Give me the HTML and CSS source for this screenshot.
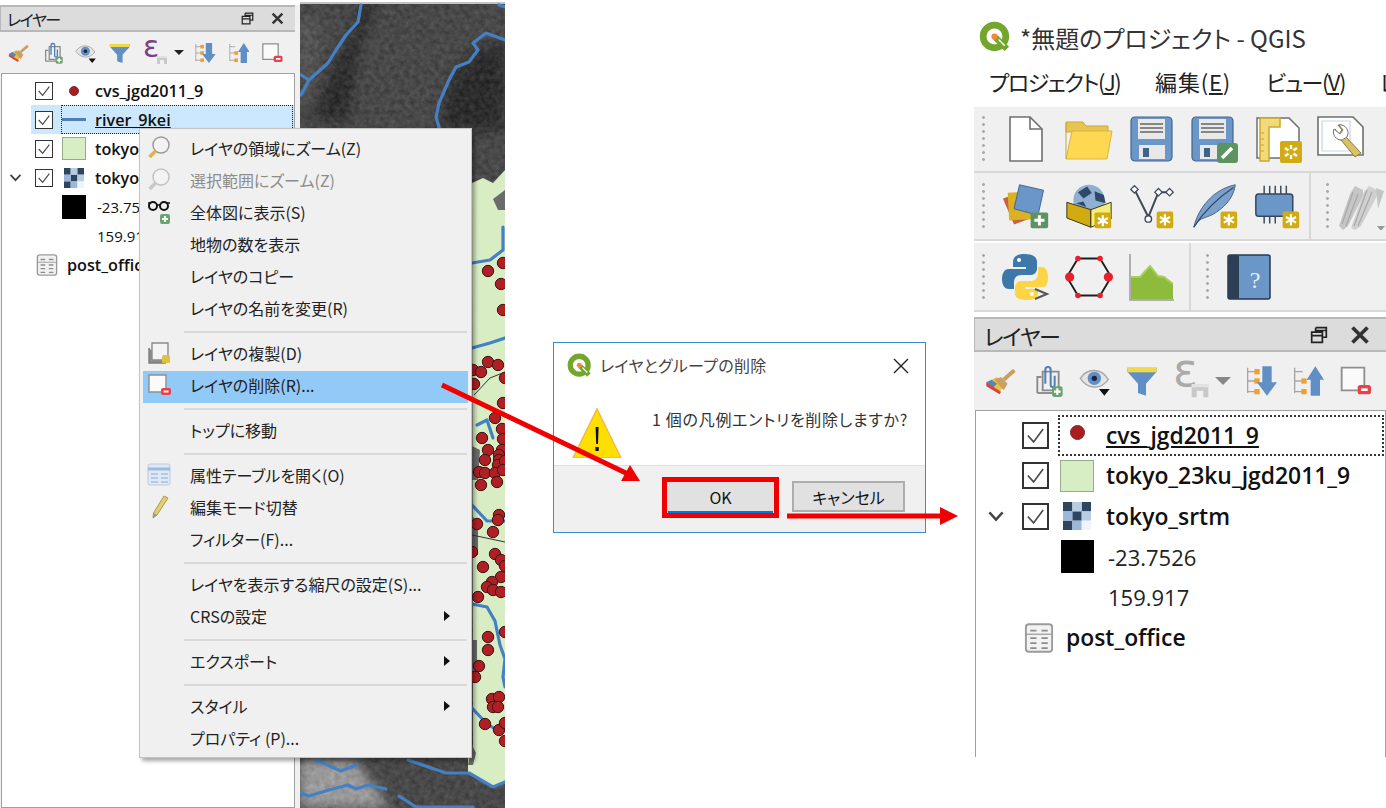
FILE: index.html
```html
<!DOCTYPE html>
<html lang="ja">
<head>
<meta charset="utf-8">
<title>QGIS レイヤの削除</title>
<link rel="stylesheet" href="styles.css">
</head>
<body>
<svg class="defs" aria-hidden="true">
  <defs>
    <symbol id="i-check" viewBox="0 0 18 18">
      <path d="M3 9l4.500 5L15 4" fill="none" stroke="#4a4a4a" stroke-width="1.300"/>
    </symbol>
    <symbol id="i-style" viewBox="0 0 24 24">
      <path d="M1 13l8-4 6 6-4 5z" fill="#e9c53d"/>
      <path d="M1 13l4-2 4 3-3 3z" fill="#4f86c6"/>
      <path d="M1 13l11 7-1 2L1 16z" fill="#d8433b"/>
      <path d="M7 11l5-2 5 5-3 5z" fill="#c9a063"/>
      <path d="M14 11l8-7" stroke="#c9a063" stroke-width="3" fill="none"/>
    </symbol>
    <symbol id="i-clip" viewBox="0 0 24 24">
      <path d="M4 21V9h3M8 5h12v14H8z" fill="none" stroke="#8a8a8a" stroke-width="1.4"/>
      <path d="M4 21h14" stroke="#8a8a8a" stroke-width="1.4"/>
      <path d="M10 14V3.500a2 2 0 0 1 4 0V15a1.500 1.500 0 0 0 3 0V8" fill="none" stroke="#4f7fb5" stroke-width="1.5"/>
      <rect x="15" y="16" width="8" height="8" rx="2" fill="#6aa56e"/>
      <path d="M19 17.500v5M16.500 20h5" stroke="#fff" stroke-width="1.6"/>
    </symbol>
    <symbol id="i-eye" viewBox="0 0 24 24">
      <path d="M1 10C6 2 17 2 22 11 16 19 6 18 1 10z" fill="#e4e4e4" stroke="#a8a8a8"/>
      <circle cx="11.500" cy="10" r="5" fill="#5f8fc4"/>
      <circle cx="11.500" cy="10" r="2" fill="#223"/>
      <path d="M15 18h8l-4 5z" fill="#111"/>
    </symbol>
    <symbol id="i-filter" viewBox="0 0 24 24">
      <path d="M1 2h22v3l-8 9v9l-6-2v-7L1 5z" fill="#5f8fc4"/>
      <path d="M1 2h22v3.500H1z" fill="#eed94e"/>
    </symbol>
    <symbol id="i-gem" viewBox="0 0 24 24">
      <path d="M13 15h10v8h-3v-4h-4v4h-3z" fill="#c9c9c9"/>
      <path d="M13 15h10v2H13z" fill="#e2e2e2"/>
    </symbol>
    <symbol id="i-expand" viewBox="0 0 24 24">
      <path d="M2 2v19M2 5h6M2 12h6M2 20h6" stroke="#a5a5a5" stroke-width="1" fill="none"/>
      <rect x="7" y="3" width="4" height="4" fill="#f0a030"/>
      <rect x="7" y="10" width="4" height="4" fill="#f0a030"/>
      <rect x="7" y="18" width="4" height="4" fill="#f0a030"/>
      <path d="M13 1h7v12h4l-7.500 10L9 13h4z" fill="#5f8fc4"/>
    </symbol>
    <symbol id="i-collapse" viewBox="0 0 24 24">
      <path d="M2 2v19M2 5h6M2 12h6M2 20h6" stroke="#a5a5a5" stroke-width="1" fill="none"/>
      <rect x="7" y="10" width="4" height="4" fill="#f0a030"/>
      <rect x="7" y="18" width="4" height="4" fill="#f0a030"/>
      <path d="M14 23h7V11h3L17.500 1 11 11h3z" fill="#5f8fc4"/>
    </symbol>
    <symbol id="i-remove" viewBox="0 0 24 24">
      <path d="M2 2h17v17H2z" fill="#fafafa" stroke="#8f8f8f" stroke-width="1.400"/>
      <rect x="14" y="15" width="10" height="7" rx="2" fill="#e8414a"/>
      <path d="M16.500 18.500h5" stroke="#fff" stroke-width="2"/>
    </symbol>
    <symbol id="i-zoom" viewBox="0 0 24 24">
      <circle cx="14" cy="9" r="8" fill="#f3f3f3" stroke="#9b9b9b" stroke-width="1.500"/>
      <path d="M8.500 15l-6 6" stroke="#e0b440" stroke-width="3.500"/>
    </symbol>
    <symbol id="i-zoomoff" viewBox="0 0 24 24">
      <circle cx="14" cy="9" r="8" fill="#f3f3f3" stroke="#c2c2c2" stroke-width="1.500"/>
      <path d="M8.500 15l-6 6" stroke="#c8c8c8" stroke-width="3.500"/>
    </symbol>
    <symbol id="i-glasses" viewBox="0 0 24 24">
      <circle cx="6" cy="6" r="4" fill="none" stroke="#111" stroke-width="2"/>
      <circle cx="17" cy="6" r="4" fill="none" stroke="#111" stroke-width="2"/>
      <path d="M10 5h3M1 3h3M19 3h4" stroke="#111" stroke-width="1.600"/>
      <rect x="13" y="14" width="10" height="10" rx="2" fill="#6aa56e"/>
      <path d="M18 16v6M15 19h6" stroke="#fff" stroke-width="2"/>
    </symbol>
    <symbol id="i-dup" viewBox="0 0 24 24">
      <path d="M2 7v15h17" fill="#8c8c8c" stroke="#7d7d7d" stroke-width="1.400"/>
      <path d="M5 2h16v17H5z" fill="#f4f4f4" stroke="#8a8a8a" stroke-width="1.400"/>
      <rect x="15" y="14" width="8" height="8" rx="1.500" fill="#dcc23f"/>
    </symbol>
    <symbol id="i-table" viewBox="0 0 24 24">
      <rect x="1" y="1" width="22" height="21" rx="2" fill="#dfe9f5" stroke="#bccbdf"/>
      <path d="M1 6h22" stroke="#9dbbe0" stroke-width="3"/>
      <path d="M4 11h7M14 11h7M4 15h7M14 15h7M4 19h7M14 19h7" stroke="#a9bfdc" stroke-width="1.500"/>
    </symbol>
    <symbol id="i-pencil" viewBox="0 0 24 24">
      <path d="M17 1l4 2-11 17-4 3 .5-5z" fill="#e4cf6a" stroke="#a89a50"/>
      <path d="M6.500 18l3.500 2-4 3z" fill="#999"/>
    </symbol>
    <symbol id="i-list" viewBox="0 0 24 24">
      <rect x="1.500" y="1" width="21" height="22" rx="2.500" fill="#f2f2f2" stroke="#9a9a9a" stroke-width="1.500"/>
      <path d="M5 6h5M14 6h5" stroke="#8c8c8c" stroke-width="1.400"/>
      <path d="M1.500 9h21" stroke="#9a9a9a"/>
      <path d="M5 12h5M14 12h5M5 16h5M14 16h5M5 20h5M14 20h5" stroke="#8c8c8c" stroke-width="1.400"/>
    </symbol>
    <symbol id="i-raster" viewBox="0 0 24 24">
      <rect width="24" height="24" fill="#dbe6f2"/>
      <rect width="8" height="8" fill="#2e4560"/>
      <rect x="16" width="8" height="8" fill="#2e4560"/>
      <rect x="8" y="8" width="8" height="8" fill="#2e4560"/>
      <rect y="16" width="8" height="8" fill="#2e4560"/>
      <rect y="8" width="8" height="8" fill="#9bb8d8"/>
      <rect x="8" width="8" height="8" fill="#b9cde2"/>
      <rect x="16" y="8" width="8" height="8" fill="#b9cde2"/>
      <rect x="8" y="16" width="8" height="8" fill="#9bb8d8"/>
      <rect x="16" y="16" width="8" height="8" fill="#f0f4f9"/>
    </symbol>
    <symbol id="i-qgis" viewBox="0 0 32 32">
      <circle cx="15" cy="15" r="11" fill="none" stroke="#73a62c" stroke-width="6.500"/>
      <path d="M16 16l11 11" stroke="#73a62c" stroke-width="6"/>
      <path d="M19 18l6 6" stroke="#fff" stroke-width="1.500"/>
      <circle cx="15" cy="15" r="3" fill="#ee8a3a"/>
    </symbol>
    <symbol id="i-warn" viewBox="0 0 50 50">
      <path d="M25 1l24 49H1z" fill="#ffdf00" stroke="#f2b94a" stroke-width="1.500"/>
      <path d="M23.600 19h3l-.6 17h-1.800zM23.400 39h3.400v4h-3.400z" fill="#111"/>
    </symbol>
    <symbol id="b-new" viewBox="0 0 48 48">
      <path d="M8 2h20l12 12v32H8z" fill="#fff" stroke="#6f6f6f" stroke-width="1.600"/>
      <path d="M28 2v12h12" fill="none" stroke="#6f6f6f" stroke-width="1.600"/>
    </symbol>
    <symbol id="b-open" viewBox="0 0 48 48">
      <path d="M1 7h17l3 4h22v6H1z" fill="#e8c451" stroke="#caa73a"/>
      <path d="M7 16h40l-5 28H1z" fill="#fdd850" stroke="#d9b541"/>
      <path d="M1 8v36" stroke="#caa73a"/>
    </symbol>
    <symbol id="b-save" viewBox="0 0 48 48">
      <rect x="3" y="2" width="41" height="44" rx="4" fill="#6a97c7" stroke="#44658f" stroke-width="1.200"/>
      <rect x="10" y="4" width="27" height="20" fill="#e8e8e8"/>
      <path d="M12 9h23M12 13h23M12 17h23" stroke="#666" stroke-width="1.400"/>
      <rect x="11" y="30" width="26" height="14" fill="#e8e8e8"/>
      <rect x="15" y="33" width="6" height="9" fill="#3e628c"/>
    </symbol>
    <symbol id="b-saveas" viewBox="0 0 48 48">
      <rect x="1" y="2" width="41" height="44" rx="4" fill="#6a97c7" stroke="#44658f" stroke-width="1.200"/>
      <rect x="8" y="4" width="27" height="20" fill="#e8e8e8"/>
      <path d="M10 9h23M10 13h23M10 17h23" stroke="#666" stroke-width="1.400"/>
      <rect x="9" y="30" width="26" height="14" fill="#e8e8e8"/>
      <rect x="13" y="33" width="6" height="9" fill="#3e628c"/>
      <rect x="26" y="28" width="21" height="20" rx="3" fill="#5c9461"/>
      <path d="M31 43l10-10" stroke="#fff" stroke-width="3.500"/>
    </symbol>
    <symbol id="b-layout" viewBox="0 0 48 48">
      <path d="M3 3h32l10 10v30H3z" fill="#fff" stroke="#6f6f6f" stroke-width="1.500"/>
      <path d="M6 3h20v9H15v34H6z" fill="#f2d97a" stroke="#c9a92e" stroke-width="1.500"/>
      <path d="M6 18h4M6 24h4M6 30h4M6 36h4" stroke="#c9a92e"/>
      <rect x="26" y="26" width="22" height="22" rx="2" fill="#d2ab12"/>
      <path d="M37 30v14M31 33l12 8M43 33l-12 8" stroke="#fff" stroke-width="2.400"/>
      <circle cx="37" cy="37" r="3" fill="#d2ab12"/>
    </symbol>
    <symbol id="b-props" viewBox="0 0 48 48">
      <path d="M1 2h35l10 10v28H1z" fill="#fff" stroke="#6f6f6f" stroke-width="1.600"/>
      <path d="M5 6h28v30H5z" fill="#fff" stroke="#c6d4ef" stroke-width="1.200"/>
      <path d="M18 14a8 8 0 0 0 6 11l14 17 6-4-15-16a8 8 0 0 0-8-12l4 5-3 4z" fill="#dcc065" stroke="#8b7a36" stroke-width="1"/>
      <path d="M17 14a8 8 0 0 0 8 11l5-3a8 8 0 0 0-8-12l4 5-3 4z" fill="#fff" stroke="#777"/>
    </symbol>
    <symbol id="b-layers" viewBox="0 0 52 48">
      <path d="M1 16l18-6 10 28-16 6z" fill="#c8623c"/>
      <path d="M7 9h26v30H7z" fill="#dcb023" transform="rotate(-3 20 24)"/>
      <path d="M19 1l26 6-6 27-26-7z" fill="#6a97c7" stroke="#3c5f8c"/>
      <rect x="31" y="31" width="19" height="17" rx="2" fill="#5c9461"/>
      <path d="M40.500 34v11M35 39.500h11" stroke="#fff" stroke-width="3.200"/>
    </symbol>
    <symbol id="b-globe" viewBox="0 0 52 48">
      <circle cx="26" cy="18" r="17" fill="#8fb0d2"/>
      <path d="M14 9l10-6 5 7-9 6zM32 8l10 4 2 9-11-3zM12 21l8-2 3 6z" fill="#2d4a6a"/>
      <path d="M2 20l26 8v19L2 37z" fill="#d2ab12" stroke="#302a10"/>
      <path d="M28 28l22-8v18l-22 9z" fill="#f5ec7a" stroke="#302a10"/>
      <rect x="32" y="31" width="18" height="17" rx="2" fill="#d2ab12"/>
      <path d="M41 34v12M35.500 37l11 6M46.500 37l-11 6" stroke="#fff" stroke-width="2.400"/>
    </symbol>
    <symbol id="b-vector" viewBox="0 0 52 48">
      <path d="M7 6l15 30L33 9h10" fill="none" stroke="#3c4a5a" stroke-width="2.200"/>
      <circle cx="22" cy="38" r="3.500" fill="#fff" stroke="#3c4a5a" stroke-width="1.500"/>
      <path d="M7 2l4 4-4 4-4-4zM33 5l4 4-4 4-4-4zM45 5l4 4-4 4-4-4z" fill="#fff" stroke="#3c4a5a" stroke-width="1.400"/>
      <rect x="31" y="30" width="18" height="18" rx="2" fill="#d2ab12"/>
      <path d="M40 33v12M34.500 36l11 6M45.500 36l-11 6" stroke="#fff" stroke-width="2.400"/>
    </symbol>
    <symbol id="b-feather" viewBox="0 0 52 48">
      <path d="M3 47C8 26 24 6 48 1c-2 16-14 26-24 32-6 3-12 4-16 7z" fill="#7ba0cb" stroke="#3e628c"/>
      <path d="M3 47C14 30 28 16 46 4" fill="none" stroke="#2f4a6c" stroke-width="1.400"/>
      <rect x="32" y="30" width="18" height="18" rx="2" fill="#d2ab12"/>
      <path d="M41 33v12M35.500 36l11 6M46.500 36l-11 6" stroke="#fff" stroke-width="2.400"/>
    </symbol>
    <symbol id="b-chip" viewBox="0 0 52 48">
      <path d="M11 2v10M17 2v10M23 2v10M29 2v10M35 2v10M11 34v9M17 34v9M23 34v9" stroke="#3c4a5a" stroke-width="1.600"/>
      <rect x="2" y="11" width="40" height="24" rx="3" fill="#6a97c7" stroke="#33465e" stroke-width="1.600"/>
      <rect x="31" y="30" width="18" height="18" rx="2" fill="#d2ab12"/>
      <path d="M40 33v12M34.500 36l11 6M45.500 36l-11 6" stroke="#fff" stroke-width="2.400"/>
    </symbol>
    <symbol id="b-pencils" viewBox="0 0 48 48">
      <path d="M1 44L12 12l5-8 8 4v6L10 44l-5 4z" fill="#c5c5c5"/>
      <path d="M13 46L26 10l5-6 8 4v6L23 44l-6 4z" fill="#d0d0d0"/>
      <path d="M15 10L4 42M20 12L8 44M29 8L16 44M34 10L20 44" stroke="#a8a8a8" stroke-width="1.200"/>
      <path d="M38 6l8 3-6 18" fill="#c5c5c5"/>
      <path d="M39 44h8l-4 5z" fill="#999"/>
    </symbol>
    <symbol id="b-python" viewBox="0 0 48 48">
      <path d="M23 1c-9 0-12 3-12 8v5h13v2H7c-5 0-7 5-7 10s2 10 7 10h5v-7c0-4 3-7 7-7h10c3 0 6-3 6-6V9c0-5-4-8-12-8z" fill="#3d78ab"/>
      <circle cx="17" cy="7" r="2" fill="#fff"/>
      <path d="M36 14v7c0 4-3 7-7 7H19c-3 0-6 3-6 6v7c0 4 5 6 12 6 8 0 11-3 11-7v-4H23v-2h18c4 0 5-5 5-10s-2-10-6-10z" fill="#fcd445"/>
      <circle cx="30" cy="41" r="2" fill="#fff"/>
      <path d="M33 36l12 5-12 5" fill="none" stroke="#555" stroke-width="2"/>
    </symbol>
    <symbol id="b-hex" viewBox="0 0 52 48">
      <path d="M14 4h24l12 20-12 20H14L2 24z" fill="none" stroke="#1e1e1e" stroke-width="2"/>
      <circle cx="14" cy="4" r="3" fill="#e8202a"/><circle cx="38" cy="4" r="3" fill="#e8202a"/>
      <circle cx="5" cy="24" r="5" fill="#e8202a"/><circle cx="47" cy="24" r="5" fill="#e8202a"/>
      <circle cx="14" cy="44" r="3" fill="#e8202a"/><circle cx="38" cy="44" r="3" fill="#e8202a"/>
    </symbol>
    <symbol id="b-profile" viewBox="0 0 48 48">
      <path d="M3 24l9 0 10-11 8 10 6 1 9 7v15H3z" fill="#8dbb3c"/>
      <path d="M3 24l9 0 10-11 8 10 6 1 9 7" fill="none" stroke="#a9cf5a" stroke-width="2"/>
      <path d="M2 1v46h44" fill="none" stroke="#999" stroke-width="1.500"/>
    </symbol>
    <symbol id="b-help" viewBox="0 0 48 48">
      <rect x="2" y="2" width="42" height="44" rx="2" fill="#6a97c7" stroke="#27384e" stroke-width="1.500"/>
      <rect x="2" y="2" width="11" height="44" fill="#2c3f57"/>
      <text x="29" y="35" class="help-mark">?</text>
    </symbol>
  </defs>
</svg>

<svg class="map" viewBox="300 2 205 806" aria-hidden="true">
  <defs>
    <filter id="soft" x="-50%" y="-50%" width="200%" height="200%"><feGaussianBlur stdDeviation="6"/></filter>
    <filter id="grain" x="0" y="0" width="100%" height="100%" color-interpolation-filters="sRGB">
      <feTurbulence type="fractalNoise" baseFrequency=".2" numOctaves="3" seed="7"/>
      <feColorMatrix values="1 0 0 0 0 1 0 0 0 0 1 0 0 0 0 0 0 0 0 1"/>
    </filter>
  </defs>
  <rect x="300" y="2" width="205" height="806" fill="#3e3e3e"/>
  <path d="M362 0l-8 30-22 40-20 50 36 0 10-70 20-50zM440 130l10-50 20-25 35-15v90z" fill="#1e1e1e" filter="url(#soft)"/>
  <path d="M300 20h20l-8 70-12 20z" fill="#4f4f4f" filter="url(#soft)"/>
  <path d="M300 760h55l35 48H300z" fill="#a0a0a0" filter="url(#soft)"/>
  <rect x="300" y="2" width="205" height="806" filter="url(#grain)" opacity=".17"/>
  <rect x="300" y="2" width="205" height="2" fill="#c2c2c2"/>
  <path d="M472 183l11-5 10 5 12-13V782l-12 5-25-14v-15h5z" fill="#d9edc4"/>
  <path d="M493 199l12-9v20h-7zM472 446l8 4-2 30h-6zM472 515l6 10v30h-6zM472 640h5v32h-5zM472 745l4 8-3 12h-5z" fill="#6b6b6b"/>
  <g class="rivers">
    <path d="M361 5l-3 17-12 13-10 15-8 13-19 17-8 15M301 75l8 5"/>
    <path d="M499 5l6 2"/>
    <path d="M505 40l-19-7-13 10 5 7-9 12-13 5-7 13-10 23-3 14 3 10"/>
    <path d="M472 263l18-3 13-10v-23"/>
    <path d="M472 348l18-5 15-5"/>
    <path d="M477 425l10-5 6 18"/>
    <path d="M472 505l15 16h18"/>
    <path d="M472 604l15 3 8 14 5 24 5 14-2 18 2 10"/>
    <path d="M472 708l15 16 13 8"/>
    <path d="M316 760l25 11 15-6"/>
    <path d="M301 793l8 3 20-6 19-5 8 4 12-4 18 4"/>
    <path d="M399 796l17 11h57"/>
    <path d="M408 760l38 13h23l24 14 12-5"/>
  </g>
  <path class="roads" d="M474 395l16-17 15-6M472 535l33 7"/>
  <g class="dots">
    <circle cx="488" cy="271" r="5.700"/><circle cx="503" cy="263" r="5.700"/><circle cx="501" cy="284" r="5.700"/><circle cx="503" cy="310" r="5.700"/>
    <circle cx="488" cy="362" r="5.700"/><circle cx="498" cy="365" r="5.700"/><circle cx="473" cy="370" r="5.700"/><circle cx="481" cy="372" r="5.700"/>
    <circle cx="474" cy="384" r="5.700"/><circle cx="505" cy="378" r="5.700"/><circle cx="503" cy="403" r="5.700"/><circle cx="495" cy="418" r="5.700"/>
    <circle cx="502" cy="429" r="5.700"/><circle cx="482" cy="438" r="5.700"/><circle cx="503" cy="439" r="5.700"/><circle cx="488" cy="450" r="5.700"/>
    <circle cx="502" cy="450" r="5.700"/><circle cx="499" cy="455" r="5.700"/><circle cx="485" cy="460" r="5.700"/><circle cx="499" cy="460" r="5.700"/>
    <circle cx="498" cy="465" r="5.700"/><circle cx="505" cy="461" r="5.700"/><circle cx="479" cy="472" r="5.700"/><circle cx="485" cy="473" r="5.700"/>
    <circle cx="495" cy="473" r="5.700"/><circle cx="503" cy="470" r="5.700"/><circle cx="481" cy="485" r="5.700"/><circle cx="497" cy="482" r="5.700"/>
    <circle cx="499" cy="515" r="5.700"/><circle cx="498" cy="520" r="5.700"/><circle cx="477" cy="524" r="5.700"/><circle cx="493" cy="532" r="5.700"/>
    <circle cx="472" cy="552" r="5.700"/><circle cx="495" cy="554" r="5.700"/><circle cx="501" cy="560" r="5.700"/><circle cx="505" cy="566" r="5.700"/>
    <circle cx="483" cy="567" r="5.700"/><circle cx="501" cy="577" r="5.700"/><circle cx="492" cy="582" r="5.700"/><circle cx="487" cy="587" r="5.700"/>
    <circle cx="493" cy="590" r="5.700"/><circle cx="501" cy="592" r="5.700"/><circle cx="478" cy="597" r="5.700"/>
    <circle cx="488" cy="637" r="5.700"/><circle cx="488" cy="650" r="5.700"/><circle cx="505" cy="632" r="5.700"/><circle cx="479" cy="666" r="5.700"/>
    <circle cx="475" cy="677" r="5.700"/><circle cx="492" cy="699" r="5.700"/><circle cx="499" cy="697" r="5.700"/><circle cx="493" cy="707" r="5.700"/>
    <circle cx="498" cy="707" r="5.700"/><circle cx="485" cy="724" r="5.700"/><circle cx="499" cy="730" r="5.700"/><circle cx="505" cy="723" r="5.700"/>
    <circle cx="505" cy="741" r="5.700"/>
  </g>
</svg>

<section class="layers layers-sm">
  <header class="dock-title">
    <span class="dock-name">レイヤー</span>
    <span class="dock-btns">
      <svg class="dock-float" viewBox="0 0 16 16"><path d="M5 1.500h9.500V10H11M1.500 5.500H11v9H1.500zM1.500 8.500H11M5 1.500v4M5 4h9.500"/></svg>
      <svg class="dock-close" viewBox="0 0 16 16"><path d="M2 2l12 12M14 2L2 14"/></svg>
    </span>
  </header>
  <div class="dock-tools">
    <svg class="tool"><use href="#i-style"/></svg>
    <svg class="tool"><use href="#i-clip"/></svg>
    <svg class="tool"><use href="#i-eye"/></svg>
    <svg class="tool"><use href="#i-filter"/></svg>
    <span class="eps-tool"><span class="eps eps-on">ε</span><svg class="gem"><use href="#i-gem"/></svg></span>
    <span class="caret caret-on"></span>
    <svg class="tool"><use href="#i-expand"/></svg>
    <svg class="tool"><use href="#i-collapse"/></svg>
    <svg class="tool"><use href="#i-remove"/></svg>
  </div>
  <div class="tree">
    <div class="row"><span class="twist"></span><div class="row-body"><span class="check"><svg class="tick"><use href="#i-check"/></svg></span><span class="sym"><span class="dot"></span></span><span class="name">cvs_jgd2011_9</span></div></div>
    <div class="row"><span class="twist"></span><div class="row-body is-selected"><span class="check"><svg class="tick"><use href="#i-check"/></svg></span><div class="focus"><span class="sym"><span class="line"></span></span><span class="name is-current">river_9kei</span></div></div></div>
    <div class="row"><span class="twist"></span><div class="row-body"><span class="check"><svg class="tick"><use href="#i-check"/></svg></span><span class="sym"><span class="swatch"></span></span><span class="name">tokyo_23ku_jgd2011_9</span></div></div>
    <div class="row"><span class="twist"><svg class="chev" viewBox="0 0 14 10"><path d="M1.500 2L7 8l5.500-6"/></svg></span><div class="row-body"><span class="check"><svg class="tick"><use href="#i-check"/></svg></span><span class="sym"><svg class="raster"><use href="#i-raster"/></svg></span><span class="name">tokyo_srtm</span></div></div>
    <div class="row"><span class="twist"></span><div class="row-body"><span class="check check-blank"></span><span class="sym"><span class="black"></span></span><span class="value">-23.7526</span></div></div>
    <div class="row"><span class="twist"></span><div class="row-body"><span class="check check-blank"></span><span class="sym"></span><span class="value">159.917</span></div></div>
    <div class="row"><span class="twist"></span><div class="row-body"><svg class="listicon"><use href="#i-list"/></svg><span class="name">post_office</span></div></div>
  </div>
</section>

<nav class="menu">
  <div class="mi"><svg class="mi-ic"><use href="#i-zoom"/></svg>レイヤの領域にズーム(Z)</div>
  <div class="mi is-disabled"><svg class="mi-ic"><use href="#i-zoomoff"/></svg>選択範囲にズーム(Z)</div>
  <div class="mi"><svg class="mi-ic"><use href="#i-glasses"/></svg>全体図に表示(S)</div>
  <div class="mi"><span class="mi-ic"></span>地物の数を表示</div>
  <div class="mi"><span class="mi-ic"></span>レイヤのコピー</div>
  <div class="mi"><span class="mi-ic"></span>レイヤの名前を変更(R)</div>
  <div class="msep"></div>
  <div class="mi"><svg class="mi-ic"><use href="#i-dup"/></svg>レイヤの複製(D)</div>
  <div class="mi is-hover"><svg class="mi-ic"><use href="#i-remove"/></svg>レイヤの削除(R)...</div>
  <div class="msep"></div>
  <div class="mi"><span class="mi-ic"></span>トップに移動</div>
  <div class="msep"></div>
  <div class="mi"><svg class="mi-ic"><use href="#i-table"/></svg>属性テーブルを開く(O)</div>
  <div class="mi"><svg class="mi-ic"><use href="#i-pencil"/></svg>編集モード切替</div>
  <div class="mi"><span class="mi-ic"></span>フィルター(F)...</div>
  <div class="msep"></div>
  <div class="mi"><span class="mi-ic"></span>レイヤを表示する縮尺の設定(S)...</div>
  <div class="mi has-sub"><span class="mi-ic"></span>CRSの設定</div>
  <div class="msep"></div>
  <div class="mi has-sub"><span class="mi-ic"></span>エクスポート</div>
  <div class="msep"></div>
  <div class="mi has-sub"><span class="mi-ic"></span>スタイル</div>
  <div class="mi"><span class="mi-ic"></span>プロパティ (P)...</div>
</nav>

<section class="dialog">
  <header class="dlg-title">
    <svg class="dlg-logo"><use href="#i-qgis"/></svg>
    <span class="dlg-name">レイヤとグループの削除</span>
    <svg class="dlg-x" viewBox="0 0 16 16"><path d="M1 1l14 14M15 1L1 15"/></svg>
  </header>
  <div class="dlg-body">
    <svg class="dlg-warn"><use href="#i-warn"/></svg>
    <p class="dlg-msg">1 個の凡例エントリを削除しますか?</p>
  </div>
  <footer class="dlg-foot">
    <div class="ok-mark"><button class="btn btn-ok">OK</button></div>
    <button class="btn btn-cancel">キャンセル</button>
  </footer>
</section>

<section class="app">
  <header class="app-title">
    <svg class="app-logo"><use href="#i-qgis"/></svg>
    <span>*無題のプロジェクト - QGIS</span>
  </header>
  <div class="app-menu">
    <span class="menu-tight">プロジェクト(<u>J</u>)</span>
    <span class="menu-loose">編集(<u>E</u>)</span>
    <span class="menu-tight">ビュー(<u>V</u>)</span>
    <span>レ</span>
  </div>
  <div class="tbar tbar-a">
    <div class="tgroup">
      <span class="grip"></span>
      <span class="cell"><svg class="big"><use href="#b-new"/></svg></span>
      <span class="cell"><svg class="big"><use href="#b-open"/></svg></span>
      <span class="cell"><svg class="big"><use href="#b-save"/></svg></span>
      <span class="cell"><svg class="big"><use href="#b-saveas"/></svg></span>
      <span class="cell"><svg class="big"><use href="#b-layout"/></svg></span>
      <span class="cell"><svg class="big"><use href="#b-props"/></svg></span>
    </div>
  </div>
  <div class="tbar tbar-b">
    <div class="tgroup tgroup-fixed">
      <span class="grip"></span>
      <span class="cell"><svg class="big"><use href="#b-layers"/></svg></span>
      <span class="cell"><svg class="big"><use href="#b-globe"/></svg></span>
      <span class="cell"><svg class="big"><use href="#b-vector"/></svg></span>
      <span class="cell"><svg class="big"><use href="#b-feather"/></svg></span>
      <span class="cell"><svg class="big"><use href="#b-chip"/></svg></span>
    </div>
    <div class="tgroup tgroup-next">
      <span class="grip"></span>
      <span class="cell cell-pencils"><svg class="big"><use href="#b-pencils"/></svg></span>
    </div>
  </div>
  <div class="tbar tbar-c">
    <div class="tgroup tgroup-py">
      <span class="grip"></span>
      <span class="cell"><svg class="big"><use href="#b-python"/></svg></span>
      <span class="cell"><svg class="big"><use href="#b-hex"/></svg></span>
      <span class="cell"><svg class="big"><use href="#b-profile"/></svg></span>
    </div>
    <div class="tgroup tgroup-next">
      <span class="grip"></span>
      <span class="cell"><svg class="big"><use href="#b-help"/></svg></span>
    </div>
  </div>
  <div class="layers layers-lg">
    <header class="dock-title">
      <span class="dock-name">レイヤー</span>
      <span class="dock-btns">
        <svg class="dock-float" viewBox="0 0 16 16"><path d="M5 1.500h9.500V10H11M1.500 5.500H11v9H1.500zM1.500 8.500H11M5 1.500v4M5 4h9.500"/></svg>
        <svg class="dock-close" viewBox="0 0 16 16"><path d="M2 2l12 12M14 2L2 14"/></svg>
      </span>
    </header>
    <div class="dock-tools">
      <svg class="tool"><use href="#i-style"/></svg>
      <svg class="tool"><use href="#i-clip"/></svg>
      <svg class="tool"><use href="#i-eye"/></svg>
      <svg class="tool"><use href="#i-filter"/></svg>
      <span class="eps-tool"><span class="eps">ε</span><svg class="gem"><use href="#i-gem"/></svg></span>
      <span class="caret"></span>
      <svg class="tool"><use href="#i-expand"/></svg>
      <svg class="tool"><use href="#i-collapse"/></svg>
      <svg class="tool"><use href="#i-remove"/></svg>
    </div>
    <div class="tree">
      <div class="row"><span class="twist"></span><div class="row-body"><span class="check"><svg class="tick"><use href="#i-check"/></svg></span><div class="focus"><span class="sym"><span class="dot"></span></span><span class="name is-current">cvs_jgd2011_9</span></div></div></div>
      <div class="row"><span class="twist"></span><div class="row-body"><span class="check"><svg class="tick"><use href="#i-check"/></svg></span><span class="sym"><span class="swatch"></span></span><span class="name">tokyo_23ku_jgd2011_9</span></div></div>
      <div class="row"><span class="twist"><svg class="chev" viewBox="0 0 14 10"><path d="M1.500 2L7 8l5.500-6"/></svg></span><div class="row-body"><span class="check"><svg class="tick"><use href="#i-check"/></svg></span><span class="sym"><svg class="raster"><use href="#i-raster"/></svg></span><span class="name">tokyo_srtm</span></div></div>
      <div class="row"><span class="twist"></span><div class="row-body"><span class="check check-blank"></span><span class="sym"><span class="black"></span></span><span class="value">-23.7526</span></div></div>
      <div class="row"><span class="twist"></span><div class="row-body"><span class="check check-blank"></span><span class="sym"></span><span class="value">159.917</span></div></div>
      <div class="row"><span class="twist"></span><div class="row-body"><svg class="listicon"><use href="#i-list"/></svg><span class="name">post_office</span></div></div>
    </div>
  </div>
</section>

<svg class="arrows" viewBox="0 0 1386 808" aria-hidden="true">
  <path d="M442 385L628 474" stroke="#f00000" stroke-width="5"/>
  <path d="M640 481h-19l9-16z" fill="#f00000"/>
  <path d="M787 516h154" stroke="#f00000" stroke-width="5"/>
  <path d="M958 516l-18-9v18z" fill="#f00000"/>
</svg>
</body>
</html>
```
FILE: styles.css
```css
* { box-sizing: border-box; }

html, body { margin: 0; padding: 0; }

body {
  position: relative;
  width: 1386px;
  height: 808px;
  overflow: hidden;
  background: #fff;
  color: #222;
  font-family: "Noto Sans CJK JP", "Open Sans", sans-serif;
  font-feature-settings: "palt";
}

.defs { position: absolute; width: 0; height: 0; }
.help-mark { font: 24px "Liberation Serif", serif; fill: #e8eef6; text-anchor: middle; }

/* map canvas */
.map { position: absolute; left: 300px; top: 2px; width: 205px; height: 806px; }
.rivers path { fill: none; stroke: #4580c4; stroke-width: 3.200; stroke-linejoin: round; stroke-linecap: round; }
.roads { fill: none; stroke: #333; stroke-width: 1; }
.dots circle { fill: #b01f24; stroke: #3a1416; stroke-width: 1; }

/* layer panel */
.layers { display: flex; flex-direction: column; }
.layers-sm { position: absolute; left: 0; top: 5px; width: 300px; height: 803px; padding-right: 5px; background: #f0f0f0; }
.layers-lg { width: 412px; flex: 1; min-height: 0; margin-top: 5px; }

.dock-title {
  display: flex;
  align-items: center;
  justify-content: space-between;
  background: #dcdcdc;
  border: 1px solid #b8b8b8;
  border-width: 2px 0 2px 1px;
  flex: none;
}
.layers-sm .dock-title { height: 27px; padding: 0 11px 0 6px; }
.layers-lg .dock-title { height: 35px; padding: 0 16px 0 9px; }
.dock-name { color: #222; }
.layers-sm .dock-name { font-size: 16px; letter-spacing: -1.500px; }
.layers-lg .dock-name { font-size: 22px; letter-spacing: -1.200px; }
.dock-btns { display: flex; align-items: center; }
.dock-float { fill: none; stroke: #222; stroke-width: 1.500; }
.dock-close { fill: none; stroke: #333; stroke-width: 3; }
.layers-sm .dock-float { width: 13px; height: 13px; margin-right: 17px; }
.layers-sm .dock-close { width: 13px; height: 13px; }
.layers-lg .dock-float { width: 18px; height: 18px; margin-right: 22px; }
.layers-lg .dock-close { width: 20px; height: 20px; }

.dock-tools { display: flex; align-items: center; flex: none; background: #f0f0f0; }
.layers-sm .dock-tools { height: 41px; padding-left: 8px; }
.layers-lg .dock-tools { height: 58px; padding-left: 11px; }
.layers-sm .tool { width: 22px; height: 22px; margin-right: 12px; }
.layers-lg .tool { width: 32px; height: 32px; margin-right: 15px; }

.eps-tool { position: relative; display: block; color: #aaa; flex: none; }
.layers-sm .eps-tool { width: 22px; height: 24px; margin-right: 9px; }
.layers-lg .eps-tool { width: 34px; height: 36px; margin-right: 8px; }
.eps { display: block; line-height: 1; font-family: "DejaVu Sans", sans-serif; }
.eps-on { color: #7b3f87; }
.layers-sm .eps { font-size: 30px; margin-top: -9px; }
.layers-lg .eps { font-size: 46px; margin-top: -16px; }
.gem { position: absolute; bottom: 0; }
.layers-sm .gem { width: 24px; height: 24px; right: -3px; }
.layers-lg .gem { width: 40px; height: 40px; right: -3px; }
.caret {
  width: 0;
  height: 0;
  flex: none;
  border-style: solid;
  border-color: #888 transparent transparent;
}
.caret-on { border-top-color: #222; }
.layers-sm .caret { border-width: 5px 5px 0; margin-right: 10px; }
.layers-lg .caret { border-width: 8px 8px 0; margin-right: 14px; }

.tree { flex: 1; min-height: 0; background: #fff; border: 1px solid #a0a0a0; font-family: "Open Sans", "Noto Sans CJK JP", sans-serif; }
.layers-sm .tree { padding-top: 2px; margin-left: 1px; }
.layers-lg .tree { padding-top: 4px; margin-left: 1px; border-bottom: 0; }

.row { display: flex; align-items: center; }
.layers-sm .row { height: 29px; }
.layers-lg .row { height: 40.500px; }
.twist { display: flex; align-items: center; justify-content: center; flex: none; }
.layers-sm .twist { width: 29px; }
.layers-lg .twist { width: 39px; }
.chev { fill: none; stroke: #444; stroke-width: 2; }
.layers-sm .chev { width: 13px; height: 9px; margin-left: -2px; }
.layers-lg .chev { width: 18px; height: 12px; }

.row-body { display: flex; align-items: center; flex: 1; min-width: 0; height: 100%; }
.layers-sm .row-body { padding-left: 4px; }
.layers-lg .row-body { padding-left: 7px; }
.is-selected { background: #cce8ff; }

.check { display: flex; align-items: center; justify-content: center; flex: none; border: 1px solid #333; background: #fff; }
.check-blank { border-color: transparent; background: transparent; }
.layers-sm .check { width: 18px; height: 18px; margin-right: 9px; }
.layers-lg .check { width: 27px; height: 27px; margin-right: 11px; border-width: 2px; }
.tick { display: block; }
.layers-sm .tick { width: 16px; height: 16px; }
.layers-lg .tick { width: 23px; height: 23px; }

.focus { display: flex; align-items: center; flex: 1; min-width: 0; align-self: stretch; }
.layers-sm .focus { border: 1px dotted #222; margin: 0 1px 0 -1px; }
.layers-lg .focus { border: 2px dotted #333; margin: 0 1px 0 -2px; }

.sym { display: flex; align-items: center; justify-content: center; flex: none; }
.layers-sm .sym { width: 24px; margin-right: 9px; }
.layers-lg .sym { width: 34px; margin-right: 12px; }
.dot { display: block; border-radius: 50%; background: #ab1c21; border: 1px solid #7a2a2c; }
.layers-sm .dot { width: 10px; height: 10px; }
.layers-lg .dot { width: 15px; height: 15px; margin-bottom: 6px; }
.line { display: block; width: 100%; height: 3px; background: #4f7fb5; }
.swatch { display: block; width: 100%; background: #d7edc3; border: 1px solid #9aa98c; }
.layers-sm .swatch { height: 23px; }
.layers-lg .swatch { height: 32px; }
.raster { display: block; }
.layers-sm .raster { width: 20px; height: 20px; }
.layers-lg .raster { width: 28px; height: 28px; }
.black { display: block; background: #000; }
.layers-sm .black { width: 24px; height: 24px; }
.layers-lg .black { width: 33px; height: 33px; }
.listicon { flex: none; }
.layers-sm .listicon { width: 22px; height: 24px; margin: 0 9px 0 1px; }
.layers-lg .listicon { width: 30px; height: 34px; margin: 0 12px 0 2px; }

.name, .value { white-space: nowrap; color: #111; }
.name { font-weight: 600; }
.layers-sm .name { font-size: 16.200px; }
.layers-lg .name { font-size: 22.900px; }
.layers-sm .value { font-size: 15px; margin-left: 2px; }
.layers-lg .value { font-size: 22px; margin-left: 2px; color: #222; }
.is-current { text-decoration: underline; }

/* context menu */
.menu {
  position: absolute;
  left: 139px;
  top: 128px;
  width: 333px;
  height: 630px;
  padding: 5px 3px;
  background: #f0f0f0;
  border: 1px solid #c4c4c4;
  box-shadow: 3px 3px 4px rgba(0, 0, 0, .35);
  font-size: 16px;
}
.mi { display: flex; align-items: center; height: 32px; padding-bottom: 4px; white-space: nowrap; color: #222; position: relative; }
.mi-ic { display: block; flex: none; width: 24px; height: 24px; margin: 0 19px 0 4px; }
.is-disabled { color: #8c8c8c; }
.is-hover { background: #91c9f7; }
.has-sub::after {
  content: "";
  position: absolute;
  right: 18px;
  top: 9px;
  border-style: solid;
  border-width: 5px 0 5px 6px;
  border-color: transparent transparent transparent #111;
}
.msep { height: 13px; padding: 5px 1px 0 41px; }
.msep::before { content: ""; display: block; height: 2px; background: #d9d9d9; }

/* dialog */
.dialog {
  position: absolute;
  left: 553px;
  top: 342px;
  width: 373px;
  height: 191px;
  display: flex;
  flex-direction: column;
  background: #fff;
  border: 1px solid #3a8ccc;
}
.dlg-title { display: flex; align-items: center; height: 46px; padding: 0 16px 0 13px; flex: none; }
.dlg-logo { width: 26px; height: 26px; margin-right: 7px; }
.dlg-name { flex: 1; font-size: 16px; color: #444; padding-bottom: 3px; letter-spacing: .3px; }
.dlg-x { width: 16px; height: 16px; fill: none; stroke: #222; stroke-width: 1.400; }
.dlg-body { display: flex; align-items: flex-start; flex: 1; padding-left: 18px; }
.dlg-warn { width: 50px; height: 50px; margin-top: 19px; flex: none; }
.dlg-msg { margin: 18px 0 0 30px; font-size: 16px; color: #333; white-space: nowrap; letter-spacing: .7px; }
.dlg-foot {
  display: flex;
  align-items: flex-start;
  height: 67px;
  flex: none;
  background: #f0f0f0;
  border-top: 1px solid #dfdfdf;
  padding: 11px 0 0 108px;
}
.ok-mark { border: 5px solid #f00000; background: #e1e1e1; width: 117px; height: 41px; padding: 0 1px; }
.btn { background: #e1e1e1; color: #111; font: 16px "Noto Sans CJK JP", sans-serif; font-feature-settings: "palt"; padding: 0; }
.btn-ok { display: block; width: 100%; height: 100%; border: 0; border-bottom: 2px solid #0078d7; }
.btn-cancel { width: 113px; height: 31px; margin: 4px 0 0 13px; border: 2px solid #adadad; }

/* app window */
.app { position: absolute; left: 974px; top: 0; width: 412px; height: 757px; display: flex; flex-direction: column; }
.app-title { display: flex; align-items: center; height: 60px; padding: 14px 0 0 5px; font-size: 24px; color: #333; white-space: nowrap; flex: none; }
.app-logo { width: 33px; height: 33px; margin-right: 8px; flex: none; }
.app-menu { display: flex; height: 47px; align-items: center; padding: 0 0 6px 15px; gap: 35px; font-size: 22px; color: #222; white-space: nowrap; flex: none; }
.menu-tight { letter-spacing: -1.500px; }
.menu-loose { letter-spacing: .8px; }
.tbar { display: flex; flex: none; background: #f0f0f0; border-bottom: 2px solid #d8d8d8; overflow: hidden; }
.tbar-a { height: 66px; }
.tbar-b { height: 68px; }
.tbar-c { height: 71px; border-top: 2px solid #fff; }
.tgroup { display: flex; align-items: center; flex: none; }
.tgroup-fixed { border-right: 2px solid #d8d8d8; }
.tgroup-py { border-right: 2px solid #d8d8d8; padding-right: 6px; }
.tgroup-next { padding-left: 7px; }
.grip {
  display: block;
  flex: none;
  width: 20px;
  height: 50px;
  margin-left: 7px;
  margin-right: -7px;
  background: radial-gradient(circle, #aaa 1.300px, transparent 1.500px) 0 0 / 5px 7px repeat-y;
}
.cell { display: flex; align-items: center; justify-content: center; width: 63px; flex: none; }
.cell-pencils { justify-content: flex-start; }
.big { width: 48px; height: 48px; display: block; }

/* arrows */
.arrows { position: absolute; left: 0; top: 0; width: 1386px; height: 808px; pointer-events: none; }
```
